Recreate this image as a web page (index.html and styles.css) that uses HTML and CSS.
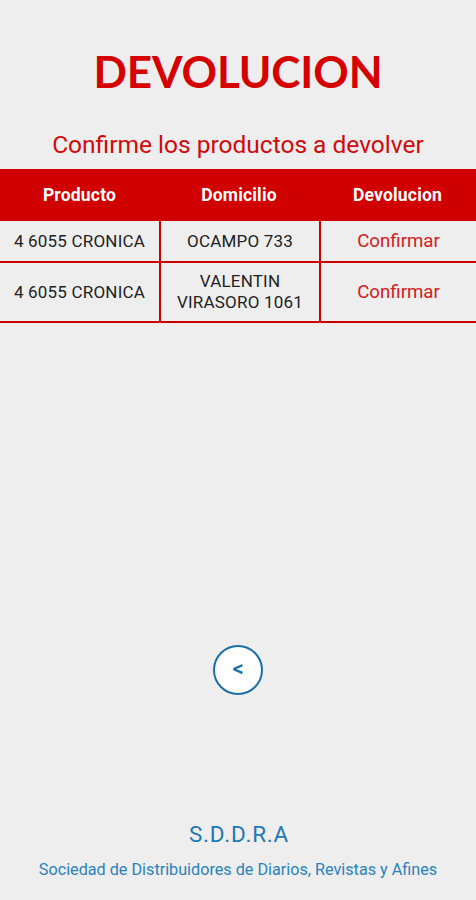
FILE: index.html
```html
<!DOCTYPE html>
<html lang="es">
<head>
<meta charset="utf-8">
<title>Devolucion</title>
<link rel="stylesheet" href="styles.css">
</head>
<body>
<div class="page">
  <h1 class="title">DEVOLUCION</h1>
  <p class="subtitle">Confirme los productos a devolver</p>
  <div class="table">
    <div class="row head">
      <div class="cell">Producto</div>
      <div class="cell">Domicilio</div>
      <div class="cell">Devolucion</div>
    </div>
    <div class="row r1">
      <div class="cell">4 6055 CRONICA</div>
      <div class="cell">OCAMPO 733</div>
      <div class="cell link">Confirmar</div>
    </div>
    <div class="row r2">
      <div class="cell">4 6055 CRONICA</div>
      <div class="cell">VALENTIN<br>VIRASORO 1061</div>
      <div class="cell link">Confirmar</div>
    </div>
  </div>
  <div class="back-wrap">
    <button class="back" type="button">&lt;</button>
  </div>
  <footer class="footer">
    <div class="brand">S.D.D.R.A</div>
    <div class="brand-sub">Sociedad de Distribuidores de Diarios, Revistas y Afines</div>
  </footer>
</div>
</body>
</html>
```
FILE: styles.css
```css
html, body {
  margin: 0;
  padding: 0;
  background: #eeeeee;
}
.page {
  width: 476px;
  height: 900px;
  display: flex;
  flex-direction: column;
  font-family: Roboto, "Liberation Sans", sans-serif;
}
.title {
  margin: 48px 0 0;
  text-align: center;
  font-family: Lato, "Liberation Sans", sans-serif;
  font-weight: 700;
  font-size: 44px;
  line-height: 46px;
  color: #d50000;
  letter-spacing: -0.1px;
}
.subtitle {
  margin: 37px 0 0;
  text-align: center;
  font-size: 24.5px;
  line-height: 28px;
  color: #d10a0a;
}
.table {
  margin-top: 10px;
  border-bottom: 2px solid #cc0000;
}
.row {
  display: grid;
  grid-template-columns: 159px 160px 157px;
}
.head {
  background: #d00000;
  height: 52px;
}
.head .cell {
  color: #fff;
  font-weight: 700;
  font-size: 17.5px;
  border: none;
}
.cell {
  display: flex;
  align-items: center;
  justify-content: center;
  text-align: center;
  font-size: 17px;
  letter-spacing: 0.2px;
  line-height: 21px;
  color: #222;
  border-left: 2px solid #cc0000;
}
.cell:first-child {
  border-left: none;
}
.r1 {
  height: 40px;
  border-bottom: 2px solid #cc0000;
}
.r2 {
  height: 58px;
}
.cell.link {
  color: #d32020;
  font-size: 18.7px;
  letter-spacing: 0;
}
.back-wrap {
  display: flex;
  justify-content: center;
  margin-top: 322px;
}
.back {
  width: 50px;
  height: 50px;
  border-radius: 50%;
  border: 2.5px solid #1a6ea8;
  background: #fff;
  color: #1a6ea8;
  font-family: Roboto, sans-serif;
  font-weight: 500;
  font-size: 22px;
  line-height: 1;
  padding: 0 0 2px;
  box-sizing: border-box;
}
.footer {
  margin-top: auto;
  padding-bottom: 21px;
  text-align: center;
}
.brand {
  font-size: 22.5px;
  letter-spacing: 0.8px;
  color: #1f78b4;
  line-height: 26px;
  margin-left: 2px;
}
.brand-sub {
  margin-top: 13px;
  font-size: 16.2px;
  color: #2a82bd;
  line-height: 19px;
}
```
